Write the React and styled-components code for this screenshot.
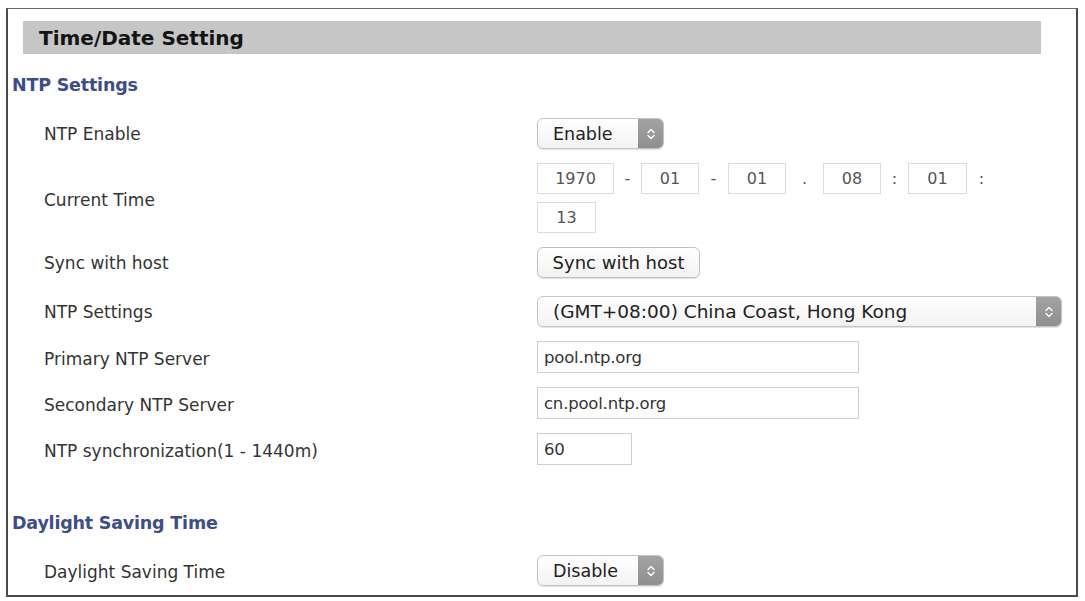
import React from 'react';
import styled, { createGlobalStyle } from 'styled-components';

const Global = createGlobalStyle`
  html, body {
    margin: 0;
    padding: 0;
    background: #fff;
  }
  body {
    font-family: 'DejaVu Sans', Verdana, sans-serif;
  }
`;

const Frame = styled.div`
  box-sizing: border-box;
  margin: 8px 0 0 6px;
  width: 1072px;
  height: 589px;
  border: 2px solid #4a4a4a;
  border-top-width: 1px;
  border-top-color: #6a6a6a;
  padding-top: 12px;
`;

const TitleBar = styled.div`
  margin-left: 15px;
  width: 1018px;
  height: 33px;
  background: #c6c6c6;
  display: flex;
  align-items: center;
  padding-left: 16px;
  box-sizing: border-box;
  font-family: 'DejaVu Sans', Verdana, sans-serif;
  font-weight: bold;
  font-size: 20px;
  color: #141414;
`;

const SectionTitle = styled.div`
  margin-top: ${p => p.$top}px;
  margin-left: 4px;
  height: 18px;
  line-height: 18px;
  font-family: 'DejaVu Sans', Verdana, sans-serif;
  font-weight: bold;
  font-size: 17.5px;
  letter-spacing: -0.2px;
  color: #3a4d8c;
`;

const Grid = styled.div`
  margin-top: ${p => p.$top}px;
  display: grid;
  grid-template-columns: 493px 1fr;
  row-gap: 14px;
  padding-left: 36px;
  align-items: center;
`;

const Label = styled.div`
  font-family: 'DejaVu Sans', Tahoma, sans-serif;
  font-size: 17px;
  color: #333;
  padding-top: ${p => p.$down || 0}px;
`;

const Control = styled.div`
  display: flex;
  flex-wrap: wrap;
  align-items: center;
  row-gap: 8px;
  width: ${p => p.$width || 'auto'};
  margin-top: ${p => p.$shift || 0}px;
`;

const SelectBox = styled.div`
  box-sizing: border-box;
  width: ${p => p.$width}px;
  height: 31px;
  display: flex;
  align-items: stretch;
  border: 1px solid #c4c4c4;
  border-radius: 6px;
  background: linear-gradient(#ffffff, #f3f3f3);
  box-shadow: 0 1px 1px rgba(0, 0, 0, 0.12);
  overflow: hidden;
`;

const SelectText = styled.span`
  flex: 1;
  display: flex;
  align-items: center;
  padding-left: ${p => p.$pad}px;
  font-family: 'DejaVu Sans', 'Liberation Sans', sans-serif;
  font-size: ${p => p.$size}px;
  color: #222;
  white-space: nowrap;
`;

const Stepper = styled.span`
  width: 25px;
  background: linear-gradient(#a3a3a3, #8f8f8f);
  display: flex;
  align-items: center;
  justify-content: center;
`;

const TimeBox = styled.div`
  box-sizing: border-box;
  width: ${p => p.$width}px;
  height: 31px;
  border: 1px solid #dcdcdc;
  display: flex;
  align-items: center;
  justify-content: center;
  font-family: 'DejaVu Sans', sans-serif;
  font-size: 16px;
  color: #555;
`;

const Sep = styled.span`
  width: ${p => p.$w}px;
  text-align: center;
  font-family: 'DejaVu Sans', sans-serif;
  font-size: 16px;
  color: #555;
`;

const Button = styled.button`
  box-sizing: border-box;
  width: 163px;
  height: 31px;
  border: 1px solid #c0c0c0;
  border-radius: 6px;
  background: linear-gradient(#ffffff, #f2f2f2);
  box-shadow: 0 1px 1px rgba(0, 0, 0, 0.12);
  font-family: 'DejaVu Sans', sans-serif;
  font-size: 18px;
  color: #222;
  padding: 0;
  white-space: nowrap;
`;

const TextInput = styled.div`
  box-sizing: border-box;
  width: ${p => p.$width}px;
  height: 32px;
  border: 1px solid #cfcfcf;
  display: flex;
  align-items: center;
  padding-left: 6px;
  font-family: 'DejaVu Sans', 'Liberation Sans', sans-serif;
  font-size: 16.5px;
  letter-spacing: -0.2px;
  color: #333;
`;

function Chevrons() {
  return (
    <svg width="10" height="16" viewBox="0 0 10 16">
      <path d="M2 6.5 L5 3.5 L8 6.5 M2 9.5 L5 12.5 L8 9.5" fill="none" stroke="#fff" strokeWidth="1.4" strokeLinecap="round" strokeLinejoin="round" />
    </svg>
  );
}

function Select({ width, value, size = 17.5, pad = 15 }) {
  return (
    <SelectBox $width={width}>
      <SelectText $size={size} $pad={pad}>{value}</SelectText>
      <Stepper><Chevrons /></Stepper>
    </SelectBox>
  );
}

export default function App() {
  return (
    <>
      <Global />
      <Frame>
        <TitleBar>Time/Date Setting</TitleBar>
        <SectionTitle $top={22}>NTP Settings</SectionTitle>
        <Grid $top={24}>
          <Label>NTP Enable</Label>
          <Control><Select width={127} value="Enable" /></Control>

          <Label $down={3}>Current Time</Label>
          <Control $width="470px">
            <TimeBox $width={77}>1970</TimeBox>
            <Sep $w={27}>-</Sep>
            <TimeBox $width={58}>01</TimeBox>
            <Sep $w={29}>-</Sep>
            <TimeBox $width={58}>01</TimeBox>
            <Sep $w={37}>.</Sep>
            <TimeBox $width={58}>08</TimeBox>
            <Sep $w={27}>:</Sep>
            <TimeBox $width={59}>01</TimeBox>
            <Sep $w={29}>:</Sep>
            <TimeBox $width={59}>13</TimeBox>
          </Control>

          <Label>Sync with host</Label>
          <Control><Button>Sync with host</Button></Control>

          <Label $down={5}>NTP Settings</Label>
          <Control $shift={4}><Select width={525} size={18.5} value="(GMT+08:00) China Coast, Hong Kong" /></Control>

          <Label $down={3}>Primary NTP Server</Label>
          <Control><TextInput $width={322}>pool.ntp.org</TextInput></Control>

          <Label $down={3}>Secondary NTP Server</Label>
          <Control><TextInput $width={322}>cn.pool.ntp.org</TextInput></Control>

          <Label $down={3}>NTP synchronization(1 - 1440m)</Label>
          <Control><TextInput $width={95}>60</TextInput></Control>
        </Grid>

        <SectionTitle $top={49}>Daylight Saving Time</SectionTitle>
        <Grid $top={23}>
          <Label $down={2}>Daylight Saving Time</Label>
          <Control><Select width={127} value="Disable" /></Control>
        </Grid>
      </Frame>
    </>
  );
}
